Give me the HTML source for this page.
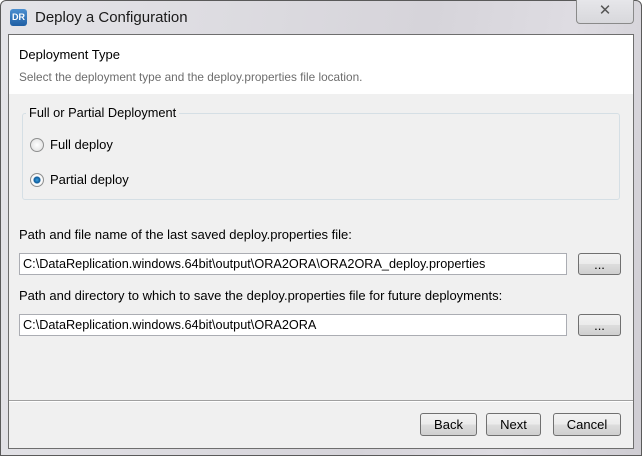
<!DOCTYPE html>
<html><head><style>
*{box-sizing:border-box;margin:0;padding:0}
body{width:642px;height:456px;overflow:hidden;background:#fff;font-family:"Liberation Sans",sans-serif;font-size:13px;color:#000;position:relative}
.abs{position:absolute}
.frame{left:0;top:0;width:642px;height:456px;border:1px solid #5a5a5a;border-radius:6px 6px 0 0;background:linear-gradient(100deg,#e4e4e8 0%,#d6d4da 60%,#dedce2 80%,#cfcdd3 100%)}
.client{left:8px;top:34px;width:626px;height:415px;border:1px solid #6e6e6e;background:#f0f0f0}
.hdr{left:9px;top:35px;width:624px;height:59px;background:#fff}
.grp{left:22px;top:113px;width:598px;height:87px;border:1px solid #d5dfe5;border-radius:3px}
.tf{background:#fff;border:1px solid #abadb3;height:22px;padding:3px 0 0 3px;width:548px;left:19px;font-size:12.7px}
.btn{border:1px solid #707070;border-radius:3px;background:linear-gradient(#f2f2f2,#ebebeb 50%,#dddddd 51%,#cfcfcf);text-align:center;height:23px;line-height:21px}
.radio{width:14px;height:14px;border-radius:50%;border:1px solid #8e8f8f;background:radial-gradient(#fff,#dcdcdc)}
</style></head><body>
<div class="abs frame"></div>
<div class="abs" style="left:10px;top:9px;width:17px;height:17px;border-radius:3px;background:linear-gradient(#4b8fd0,#1f5fa4);color:#fff;font-size:9px;font-weight:bold;text-align:center;line-height:17px">DR</div>
<div class="abs" style="left:35px;top:9px;font-size:15px;color:#1a1a1a">Deploy a Configuration</div>
<div class="abs" style="left:576px;top:0;width:58px;height:24px;border:1px solid #8a8a8a;border-top:none;border-radius:0 0 4px 4px;background:linear-gradient(#e6e6ea,#d8d8dc);text-align:center;color:#555;font-size:15px;line-height:22px">✕</div>
<div class="abs client"></div>
<div class="abs hdr"></div>
<div class="abs" style="left:19px;top:47px;font-size:13px">Deployment Type</div>
<div class="abs" style="left:19px;top:70px;font-size:11.8px;color:#6d6d6d">Select the deployment type and the deploy.properties file location.</div>
<div class="abs grp"></div>
<div class="abs" style="left:26px;top:105px;background:#f0f0f0;padding:0 3px;font-size:12.8px">Full or Partial Deployment</div>
<div class="abs radio" style="left:30px;top:138px"></div>
<div class="abs" style="left:50px;top:137px">Full deploy</div>
<div class="abs radio" style="left:30px;top:173px;background:radial-gradient(#3aa0e0 0,#0d5a9a 3px,#fff 4px,#e0e0e0)"></div>
<div class="abs" style="left:50px;top:172px">Partial deploy</div>
<div class="abs" style="left:19px;top:227px">Path and file name of the last saved deploy.properties file:</div>
<div class="abs tf" style="top:253px">C:\DataReplication.windows.64bit\output\ORA2ORA\ORA2ORA_deploy.properties</div>
<div class="abs btn" style="left:578px;top:253px;width:43px;height:22px">...</div>
<div class="abs" style="left:19px;top:288px">Path and directory to which to save the deploy.properties file for future deployments:</div>
<div class="abs tf" style="top:314px">C:\DataReplication.windows.64bit\output\ORA2ORA</div>
<div class="abs btn" style="left:578px;top:314px;width:43px;height:22px">...</div>
<div class="abs" style="left:9px;top:400px;width:624px;height:1px;background:#a0a0a0"></div>
<div class="abs" style="left:9px;top:401px;width:624px;height:1px;background:#fff"></div>
<div class="abs btn" style="left:420px;top:413px;width:57px">Back</div>
<div class="abs btn" style="left:486px;top:413px;width:55px">Next</div>
<div class="abs btn" style="left:553px;top:413px;width:68px">Cancel</div>
</body></html>
